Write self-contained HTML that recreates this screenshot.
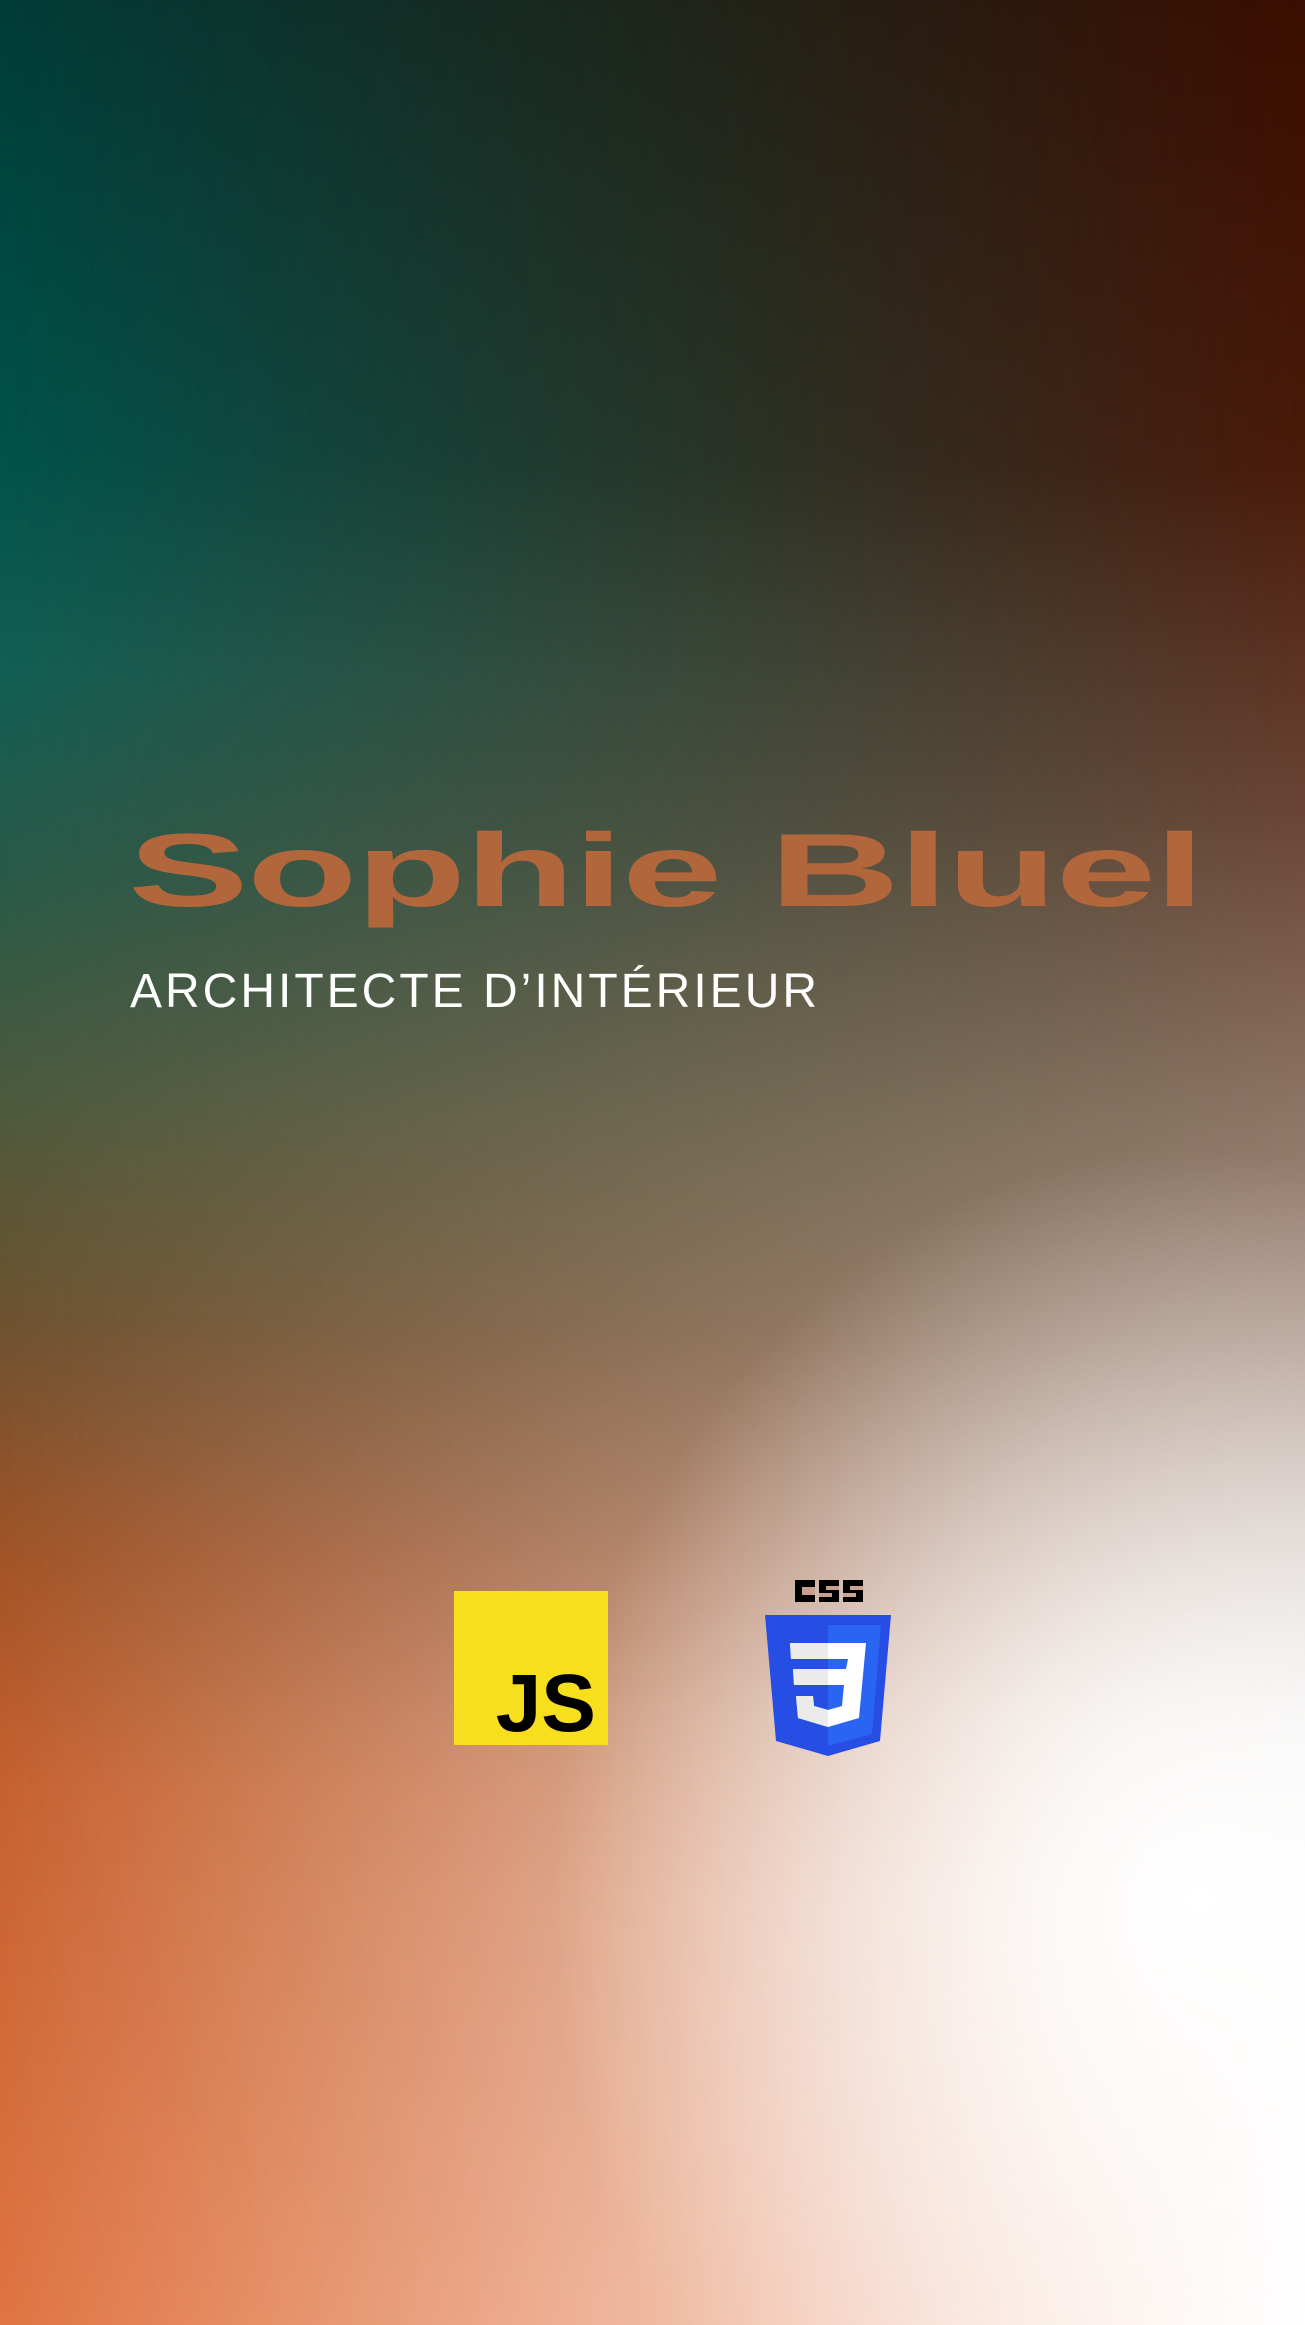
<!DOCTYPE html>
<html><head><meta charset="utf-8"><style>
html,body{margin:0;padding:0}
body{width:1305px;height:2325px;position:relative;overflow:hidden;font-family:"Liberation Sans",sans-serif}
.l{position:absolute;inset:0}
#a{background:linear-gradient(to bottom,#013c37 0%,#00524b 19%,#135f53 29%,#2a5a48 38%,#4f5a3c 48%,#6e5230 57%,#a25327 67%,#c6612f 77%,#e07442 100%)}
#b{background:linear-gradient(to bottom,#3a0e00 0%,#4a1a0a 20%,#6a4535 35%,#8e7565 48%,#aa9285 58%,#c5b7b0 66%,#e5e2df 74%,#f7f7f6 82%,#fff 100%);
-webkit-mask-image:linear-gradient(to right,transparent 0%,rgba(0,0,0,.45) 45%,#000 100%);mask-image:linear-gradient(to right,transparent 0%,rgba(0,0,0,.45) 45%,#000 100%)}
#c{background:radial-gradient(ellipse 650px 750px at 1200px 1900px,rgba(255,255,255,1) 0,rgba(255,255,255,.8) 25%,rgba(255,255,255,0) 100%)}
#t{position:absolute;left:128px;top:819px;font-weight:bold;font-size:104px;color:#b1663c;white-space:nowrap;transform-origin:0 0;transform:scaleX(1.74);line-height:1;letter-spacing:-1px}
#s{position:absolute;left:130px;top:968px;font-size:48px;color:#fff;white-space:nowrap;letter-spacing:3px;line-height:1}
</style></head><body>
<div class="l" id="a"></div><div class="l" id="b"></div><div class="l" id="c"></div>
<div id="t">Sophie Bluel</div>
<div id="s">ARCHITECTE D’INTÉRIEUR</div>
<svg style="position:absolute;left:454px;top:1591px" width="154" height="154" viewBox="0 0 154 154">
<rect width="154" height="154" fill="#f7df1e"/>
<text x="142" y="140" text-anchor="end" font-family="Liberation Sans,sans-serif" font-weight="bold" font-size="82" fill="#000">JS</text>
</svg>
<svg style="position:absolute;left:762px;top:1575px" width="132" height="185" viewBox="0 0 132 185">
<text x="66" y="25" text-anchor="middle" font-family="Liberation Mono,monospace" font-weight="bold" font-size="26" fill="none">CSS</text>
<rect x="33" y="5" width="20" height="22" fill="#000"/><rect x="40" y="12" width="13" height="8" fill="#c9a090"/>
<rect x="57" y="5" width="20" height="22" fill="#000"/><rect x="64" y="11" width="13" height="4" fill="#c9a090"/><rect x="57" y="18" width="13" height="4" fill="#c9a090"/>
<rect x="81" y="5" width="20" height="22" fill="#000"/><rect x="88" y="11" width="13" height="4" fill="#caa494"/><rect x="81" y="18" width="13" height="4" fill="#caa494"/>
<path d="M3 40 L129 40 L118 166 L66 181 L14 166 Z" fill="#264de4"/>
<path d="M66 50 L119 50 L110 159 L66 171 Z" fill="#2965f1"/>
<path d="M28 68 L104 68 L97 143 L66 152 L36 143 L34 121 L51 121 L52 131 L66 135 L80 131 L82 110 L32 110 L31 94 L84 94 L86 84 L29 84 Z" fill="#fff"/>
<path d="M28 68 L66 68 L66 84 L29 84 Z M31 94 L66 94 L66 110 L32 110 Z M34 121 L51 121 L52 131 L66 135 L66 152 L36 143 Z" fill="#ebebeb"/>
</svg>
</body></html>
